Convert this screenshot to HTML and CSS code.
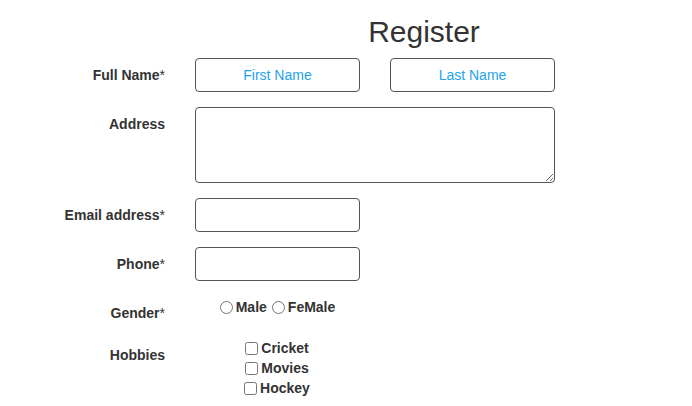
FILE: index.html
```html
<!DOCTYPE html>
<html lang="en">
<head>
<meta charset="utf-8">
<title>Register</title>
<link rel="stylesheet" href="styles.css">
</head>
<body>
<div class="page">
  <h1 class="title">Register</h1>
  <form class="form">
    <div class="row">
      <label class="label">Full Name<span class="req">*</span></label>
      <div class="pair">
        <input class="input" type="text" placeholder="First Name">
        <input class="input" type="text" placeholder="Last Name">
      </div>
    </div>
    <div class="row">
      <label class="label">Address</label>
      <div><textarea class="area"></textarea></div>
    </div>
    <div class="row">
      <label class="label">Email address<span class="req">*</span></label>
      <div><input class="input" type="email"></div>
    </div>
    <div class="row">
      <label class="label">Phone<span class="req">*</span></label>
      <div><input class="input" type="tel"></div>
    </div>
    <div class="row row-tight">
      <label class="label">Gender<span class="req">*</span></label>
      <div class="options options-inline">
        <label class="opt"><input class="radio" type="radio" name="g">Male</label>
        <label class="opt"><input class="radio" type="radio" name="g">FeMale</label>
      </div>
    </div>
    <div class="row">
      <label class="label">Hobbies</label>
      <div class="options options-stack">
        <label class="opt"><input class="check" type="checkbox">Cricket</label>
        <label class="opt"><input class="check" type="checkbox">Movies</label>
        <label class="opt"><input class="check" type="checkbox">Hockey</label>
      </div>
    </div>
  </form>
</div>
</body>
</html>
```
FILE: styles.css
```css
html, body {
  margin: 0;
  padding: 0;
  background: #fff;
}
body {
  font-family: "Liberation Sans", Arial, sans-serif;
  color: #333;
}
.page {
  width: 692px;
}
.title {
  margin: 15px 0 9px;
  padding-left: 156px;
  text-align: center;
  font-size: 30px;
  line-height: 34px;
  font-weight: normal;
  color: #333;
}
.form {
  display: flex;
  flex-direction: column;
}
.row {
  display: grid;
  grid-template-columns: 165px 1fr;
  column-gap: 30px;
  margin-bottom: 15px;
  align-items: start;
}
.row-tight {
  margin-bottom: 8px;
}
.label {
  text-align: right;
  font-size: 14px;
  line-height: 34px;
  font-weight: bold;
  color: #333;
}
.req {
  font-weight: normal;
}
.pair {
  display: flex;
  gap: 30px;
}
.input {
  box-sizing: border-box;
  width: 165px;
  height: 34px;
  margin: 0;
  border: 1px solid #555;
  border-radius: 4px;
  font-family: "Liberation Sans", Arial, sans-serif;
  font-size: 14px;
  text-align: center;
  color: #333;
  background: #fff;
  outline: none;
}
.input::placeholder {
  color: #1ea3ee;
  opacity: 1;
}
.area {
  display: block;
  box-sizing: border-box;
  width: 360px;
  height: 76px;
  margin: 0;
  border: 1px solid #555;
  border-radius: 4px;
  font-family: "Liberation Sans", Arial, sans-serif;
  font-size: 14px;
  background: #fff;
}
.options {
  width: 160px;
  font-size: 14px;
  font-weight: bold;
  color: #333;
}
.options-inline {
  display: flex;
  justify-content: center;
  height: 20px;
  align-items: center;
  margin-top: 1px;
}
.options-stack {
  display: flex;
  flex-direction: column;
  align-items: center;
}
.opt {
  display: flex;
  align-items: center;
  height: 20px;
  line-height: 16px;
}
.radio {
  width: 13px;
  height: 13px;
  margin: 0 3px 0 5px;
}
.check {
  width: 13px;
  height: 13px;
  margin: 0 3px 0 4px;
}
```
